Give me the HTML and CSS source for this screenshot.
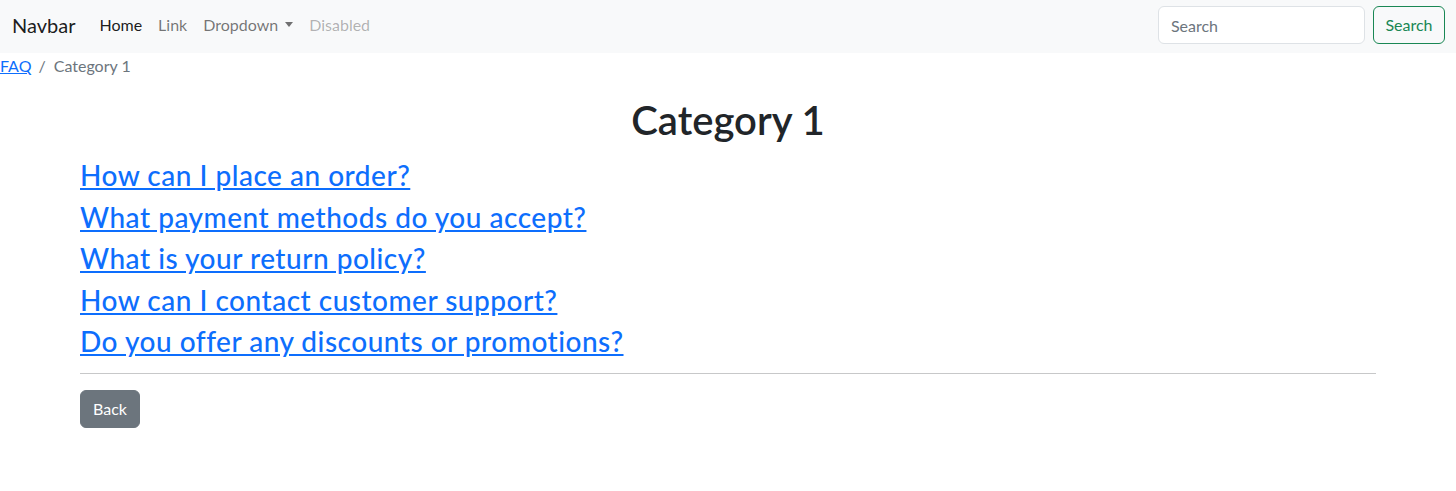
FILE: index.html
```html
<!DOCTYPE html>
<html lang="en">
<head>
<meta charset="utf-8">
<title>Category 1</title>
<link rel="stylesheet" href="styles.css">
</head>
<body>
<nav class="navbar">
  <div class="navbar-inner">
    <a class="brand" href="#">Navbar</a>
    <ul class="nav">
      <li><a class="nav-link active" href="#">Home</a></li>
      <li><a class="nav-link" href="#">Link</a></li>
      <li><a class="nav-link dropdown" href="#">Dropdown<span class="caret"></span></a></li>
      <li><a class="nav-link disabled" href="#">Disabled</a></li>
    </ul>
    <form class="search">
      <input class="search-input" type="search" placeholder="Search">
      <button class="btn btn-outline" type="button">Search</button>
    </form>
  </div>
</nav>
<nav class="crumbs">
  <ol class="breadcrumb">
    <li><a href="#">FAQ</a></li>
    <li class="sep">/</li>
    <li class="current">Category 1</li>
  </ol>
</nav>
<main class="container">
  <h1 class="title">Category 1</h1>
  <div class="questions">
    <h3 class="q"><a href="#">How can I place an order?</a></h3>
    <h3 class="q"><a href="#">What payment methods do you accept?</a></h3>
    <h3 class="q"><a href="#">What is your return policy?</a></h3>
    <h3 class="q"><a href="#">How can I contact customer support?</a></h3>
    <h3 class="q"><a href="#">Do you offer any discounts or promotions?</a></h3>
  </div>
  <hr class="rule">
  <a class="btn btn-secondary" href="#">Back</a>
</main>
</body>
</html>
```
FILE: styles.css
```css
* { box-sizing: border-box; }
html, body { margin: 0; padding: 0; }
body {
  font-family: Lato, "Noto Sans", sans-serif;
  font-size: 16px;
  line-height: 1.5;
  color: #212529;
  background: #fff;
}
a { color: #0d6efd; }

.navbar {
  background: #f8f9fa;
  padding: 6px 0 9px;
}
.navbar-inner {
  display: flex;
  align-items: center;
  height: 38px;
  padding: 0 11px 0 12px;
}
.brand {
  font-size: 20px;
  line-height: 30px;
  margin-right: 16px;
  color: rgba(0,0,0,.9);
  text-decoration: none;
}
.nav {
  display: flex;
  list-style: none;
  margin: 0;
  padding: 0;
  flex: 1;
}
.nav-link {
  display: block;
  padding: 8px;
  color: rgba(0,0,0,.55);
  text-decoration: none;
}
.nav-link.active { color: rgba(0,0,0,.9); }
.nav-link.disabled { color: rgba(0,0,0,.3); }
.caret {
  display: inline-block;
  margin-left: 7px;
  vertical-align: 4px;
  border-top: 5px solid;
  border-left: 4.5px solid transparent;
  border-right: 4.5px solid transparent;
}
.search { display: flex; }
.search-input {
  width: 207px;
  height: 38px;
  padding: 6px 12px;
  margin-right: 8px;
  font: inherit;
  color: #212529;
  background: #fff;
  border: 1px solid #dee2e6;
  border-radius: 6px;
  outline: none;
}
.search-input::placeholder { color: #6c757d; }
.btn {
  display: inline-block;
  font: inherit;
  line-height: 24px;
  padding: 6px 12px;
  border: 1px solid transparent;
  border-radius: 6px;
  text-decoration: none;
  background: transparent;
}
.btn-outline {
  color: #198754;
  border-color: #198754;
  padding: 6px 11.5px;
}
.btn-secondary {
  color: #fff;
  background: #6c757d;
  border-color: #6c757d;
}

.breadcrumb {
  display: flex;
  list-style: none;
  margin: 0 0 18px;
  padding: 1px 0 0;
}
.breadcrumb .sep { color: #6c757d; padding: 0 8px 0 7px; }
.breadcrumb .current { color: #6c757d; }

.container {
  max-width: 1320px;
  margin: 0 auto;
  padding: 0 12px;
}
.title {
  text-align: center;
  font-size: 40px;
  font-weight: 600;
  line-height: 1.2;
  margin: 0 0 15px;
}
.q {
  font-size: 28px;
  font-weight: 500;
  line-height: 1.2;
  letter-spacing: .5px;
  margin: 0 0 8px;
}
.rule {
  border: 0;
  border-top: 1px solid #212529;
  opacity: .25;
  margin: 14px 0 16px;
}
```
